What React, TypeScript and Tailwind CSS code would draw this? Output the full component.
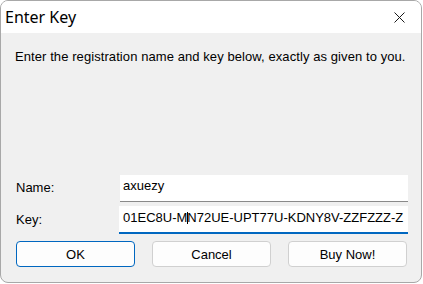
import React from "react";

export default function App() {
  const sans = { fontFamily: '"Liberation Sans", Arial, sans-serif' };
  return (
    <div className="w-[423px] h-[284px] bg-white">
      <div className="w-[422px] h-[283px] rounded-[8px] border border-[#a8a8a8] overflow-hidden flex flex-col bg-[#f0f0f0]">
        <div className="h-[32px] bg-white flex items-center justify-between shrink-0">
          <span
            className="pl-[4px] text-[16px] leading-[20px] text-black"
            style={{ fontFamily: '"Noto Sans", sans-serif' }}
          >
            Enter Key
          </span>
          <svg width="11" height="11" viewBox="0 0 11 11" className="mr-[16px] mt-[1px]">
            <path d="M0.5 0.5 L10.5 10.5 M10.5 0.5 L0.5 10.5" stroke="#1a1a1a" strokeWidth="1" fill="none" />
          </svg>
        </div>
        <div className="flex-1 flex flex-col text-[13px] leading-[15px] text-black" style={sans}>
          <p className="mt-[16px] pl-[14px] whitespace-nowrap tracking-[0.08px]">
            Enter the registration name and key below, exactly as given to you.
          </p>
          <div className="mt-[111px] flex items-start">
            <span className="w-[119px] shrink-0 pl-[15px] mt-[5px]">Name:</span>
            <div className="w-[288px] shrink-0 h-[27px] bg-white border-b border-[#8a8a8a] pl-[3px] pt-[3px]">
              axuezy
            </div>
          </div>
          <div className="mt-[4px] flex items-start">
            <span className="w-[118px] shrink-0 pl-[15px] mt-[6px]">Key:</span>
            <div className="w-[289px] shrink-0 h-[28px] bg-white border-b-2 border-[#0067c0] pl-[4px] pt-[4px] whitespace-nowrap overflow-hidden">
              01EC8U-M
              <span className="inline-block w-px h-[12px] bg-black align-[-2px] -mr-px"></span>
              N72UE-UPT77U-KDNY8V-ZZFZZZ-Z
            </div>
          </div>
          <div className="mt-[7px] pl-[15px] flex gap-[17px]">
            <button className="w-[119px] h-[26px] rounded-[4px] border border-[#0067c0] bg-[#fdfdfd] text-[13px] leading-[15px] text-black">
              OK
            </button>
            <button className="w-[119px] h-[26px] rounded-[4px] border border-[#d0d0d0] bg-[#fdfdfd] text-[13px] leading-[15px] text-black">
              Cancel
            </button>
            <button className="w-[119px] h-[26px] rounded-[4px] border border-[#d0d0d0] bg-[#fdfdfd] text-[13px] leading-[15px] text-black">
              Buy Now!
            </button>
          </div>
        </div>
      </div>
    </div>
  );
}
